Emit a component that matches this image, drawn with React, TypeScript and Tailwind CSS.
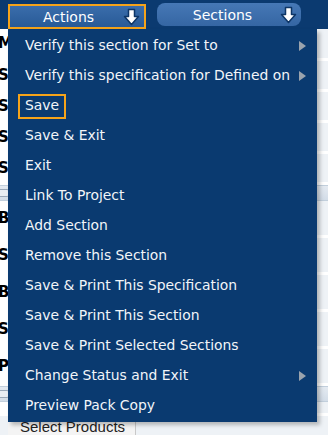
import { ReactNode } from "react";

// menu rows shown in the open Actions dropdown
type MenuItem = {
  label: string;
  sub?: boolean;
  active?: boolean;
};

const items: MenuItem[] = [
  { label: "Verify this section for Set to", sub: true },
  { label: "Verify this specification for Defined on", sub: true },
  { label: "Save", active: true },
  { label: "Save & Exit" },
  { label: "Exit" },
  { label: "Link To Project" },
  { label: "Add Section" },
  { label: "Remove this Section" },
  { label: "Save & Print This Specification" },
  { label: "Save & Print This Section" },
  { label: "Save & Print Selected Sections" },
  { label: "Change Status and Exit", sub: true },
  { label: "Preview Pack Copy" },
];

// page rows that peek out from behind the menu
const rows: { letter: string; band?: boolean; h: string }[] = [
  { letter: "M", h: "h-[32px]" },
  { letter: "S", h: "h-[31px]" },
  { letter: "S", h: "h-[31px]" },
  { letter: "S", h: "h-[31px]" },
  { letter: "S", h: "h-[31px]" },
  { letter: "", band: true, h: "h-[16px]" },
  { letter: "B", h: "h-[37px]" },
  { letter: "S", h: "h-[37px]" },
  { letter: "B", h: "h-[37px]" },
  { letter: "S", h: "h-[37px]" },
  { letter: "P", h: "h-[37px]" },
  { letter: "", band: true, h: "h-[16px]" },
  { letter: "", h: "h-[14px]" },
];

function DownArrow() {
  return (
    <svg width="17" height="18" viewBox="0 0 17 18">
      <path
        d="M5.5 1.5h6v7h4L8.5 16.5 1.5 8.5h4z"
        fill="#ffffff"
        stroke="#0d3566"
        strokeWidth="1.5"
        strokeLinejoin="round"
      />
    </svg>
  );
}

function TopButton({ children, active }: { children: ReactNode; active?: boolean }) {
  return (
    <div
      className={
        active
          ? "h-[25px] w-[138px] flex items-center bg-gradient-to-b from-[#3a6dab] to-[#285a97] border-2 border-[#f5a31a] pl-[4px] pr-[4px]"
          : "h-[23px] w-[144px] flex items-center bg-gradient-to-b from-[#4678b6] to-[#3566a3] rounded-[8px] pl-[8px] pr-[4px] mt-[-1px]"
      }
    >
      <span className="flex-1 text-center text-[14px] text-white leading-none">{children}</span>
      <DownArrow />
    </div>
  );
}

export default function App() {
  return (
    <div className="relative w-[328px] h-[435px] overflow-hidden bg-[#eef2f6] font-['DejaVu_Sans',sans-serif]">
      {/* top bar */}
      <div className="h-[29px] bg-[#0b3a70] flex items-start pt-[4px] pl-[8px] gap-[11px]">
        <TopButton active>Actions</TopButton>
        <TopButton>Sections</TopButton>
      </div>

      {/* page content behind the menu */}
      <div className="flex flex-col">
        {rows.map((r, i) => (
          <div
            key={i}
            className={
              r.band
                ? `${r.h} flex items-center bg-gradient-to-b from-[#e4eaf1] to-[#d3dde8] border-y border-[#c2cfdc]`
                : `${r.h} flex items-center bg-[#eef2f6] border-b-[3px] border-white`
            }
          >
            {r.band ? (
              <span className="ml-[-4px] w-[14px] h-[8px] rounded-[3px] border border-[#9aa8b8] bg-[#e8edf3]" />
            ) : (
              <span className="w-[8px] h-full bg-white flex items-center overflow-visible">
                <span className="text-[15px] font-bold text-black leading-none ml-[-2px]">{r.letter}</span>
              </span>
            )}
          </div>
        ))}
        <div className="h-[24px] flex items-start">
          <div className="ml-[8px] w-[128px] h-[22px] bg-[#f4f4f4] border-r border-[#c8c8c8] flex items-center pl-[12px] text-[15px] text-[#222] font-['Liberation_Sans',sans-serif]">
            Select Products
          </div>
        </div>
      </div>

      {/* dropdown menu */}
      <div className="absolute left-[8px] top-[29px] w-[309px] h-[393px] bg-[#0a3a70] shadow-[3px_3px_4px_rgba(0,0,0,0.25)] pt-[2px]">
        {items.map((it) => (
          <div key={it.label} className="h-[30px] flex items-center pl-[17px] pr-[11px]">
            <span
              className={
                it.active
                  ? "ml-[-7px] px-[5px] h-[25px] flex items-center border-2 border-[#f5a31a] text-[13.9px] text-[#f2f5f9] leading-none"
                  : "text-[13.9px] text-[#f2f5f9] leading-none"
              }
            >
              {it.label}
            </span>
            {it.sub && (
              <span className="ml-auto w-0 h-0 border-y-[5px] border-y-transparent border-l-[7px] border-l-[#9aa3ad]" />
            )}
          </div>
        ))}
      </div>
    </div>
  );
}
